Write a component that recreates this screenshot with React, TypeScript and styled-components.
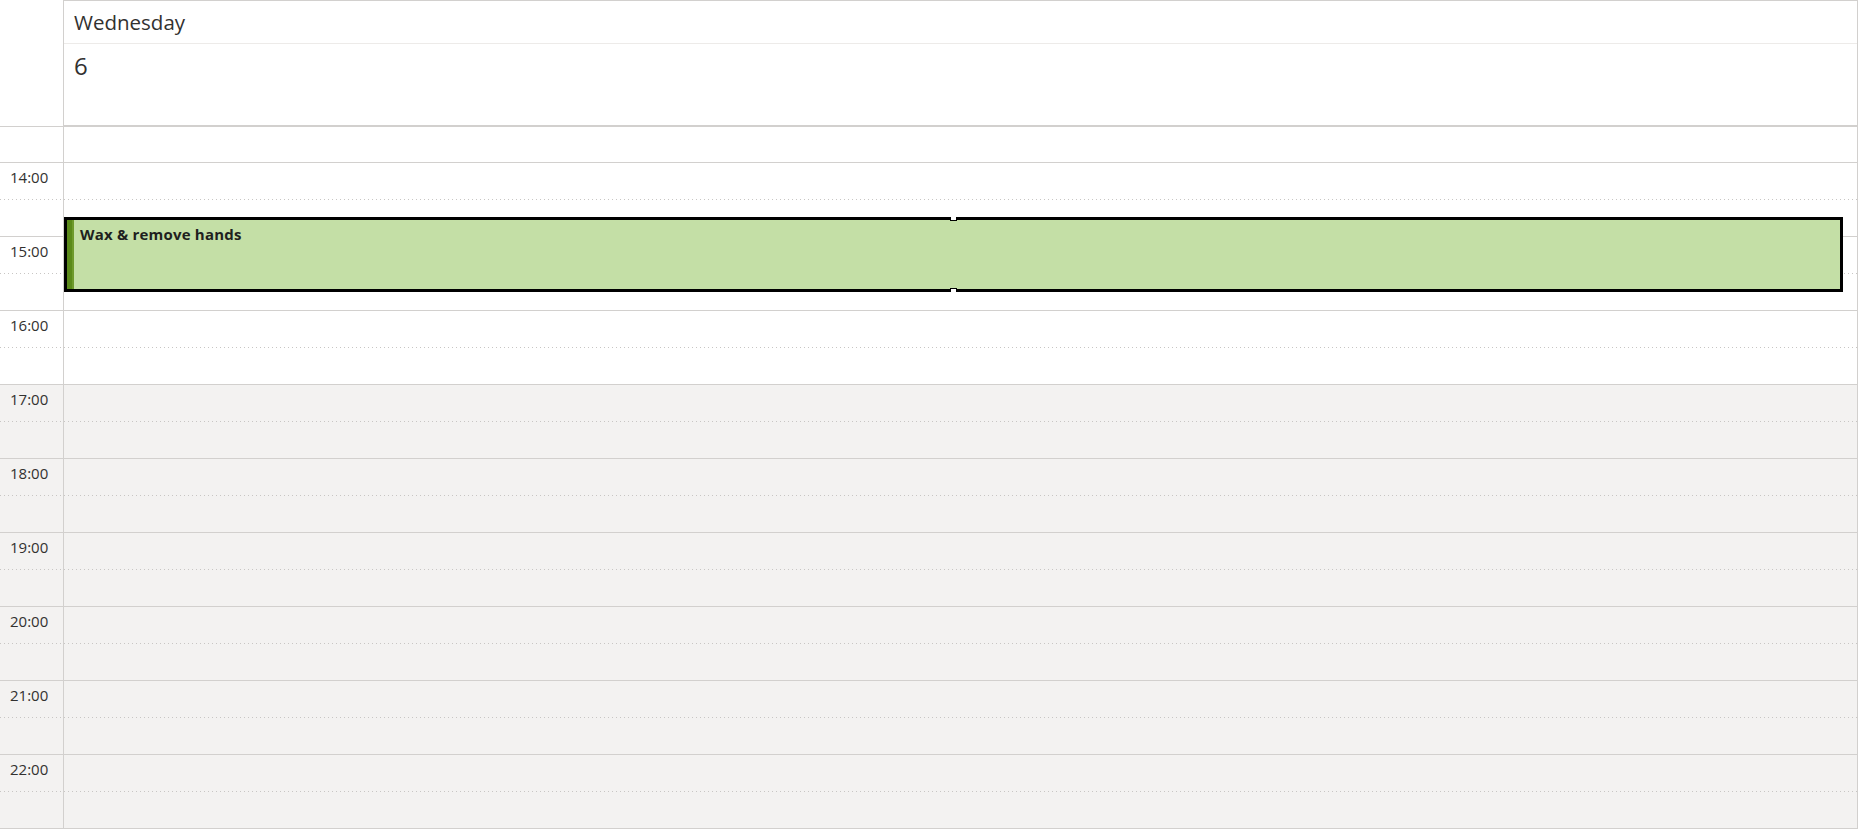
import React from 'react';
import styled, { createGlobalStyle } from 'styled-components';

const GlobalStyle = createGlobalStyle`
  html, body { margin: 0; padding: 0; background: #ffffff; }
  body { font-family: "Open Sans", "Noto Sans", sans-serif; color: #323130; }
`;

const LINE = '#d2d0ce';

const hours = [14, 15, 16, 17, 18, 19, 20, 21, 22];
const workEnd = 17;

const Calendar = styled.div`
  width: 1858px;
  height: 829px;
  overflow: hidden;
  display: flex;
  flex-direction: column;
`;

const HeaderRow = styled.div`
  display: flex;
  height: 127px;
`;

const HeaderGutter = styled.div`
  width: 63px;
  height: 126px;
  border-right: 1px solid ${LINE};
  border-bottom: 1px solid ${LINE};
`;

const DayHeader = styled.div`
  flex: 1;
  display: flex;
  flex-direction: column;
  border-top: 1px solid ${LINE};
  border-right: 1px solid ${LINE};
  border-bottom: 2px solid ${LINE};
`;

const DayName = styled.div`
  height: 42px;
  border-bottom: 1px solid #edebe9;
  padding-left: 10px;
  font-size: 20.5px;
  line-height: 42px;
`;

const DayDate = styled.div`
  flex: 1;
  padding: 6px 0 0 10px;
  font-size: 24px;
  line-height: 32px;
`;

const Row = styled.div<{ $height: number; $shaded?: boolean }>`
  display: flex;
  height: ${p => p.$height}px;
  border-bottom: 1px solid ${LINE};
  background: ${p => (p.$shaded ? '#f3f2f1' : '#ffffff')};
  position: relative;
`;

const Gutter = styled.div`
  width: 53px;
  padding: 4px 0 0 10px;
  border-right: 1px solid ${LINE};
  font-size: 15px;
  line-height: 20px;
  position: relative;
  z-index: 1;
`;

const Cell = styled.div`
  flex: 1;
  border-right: 1px solid ${LINE};
`;

const HalfLine = styled.div`
  position: absolute;
  left: 0;
  right: 0;
  top: 36px;
  height: 1px;
  background: repeating-linear-gradient(to right, #c8c6c4 0 1px, transparent 1px 4px);
`;

const Hours = styled.div`
  position: relative;
  flex: 1;
`;

const Event = styled.div`
  position: absolute;
  left: 64px;
  right: 15px;
  top: 54px;
  height: 75px;
  box-sizing: border-box;
  border: 3px solid #000000;
  background: #c4dfa6;
  display: flex;
  z-index: 2;
`;

const Stripe = styled.div`
  width: 7px;
  background: linear-gradient(to right, #5b8a1a 0 5px, #6e9a2c 5px 7px);
`;

const EventTitle = styled.div`
  padding: 5px 0 0 6px;
  font-size: 15px;
  letter-spacing: 0.2px;
  font-weight: 700;
  color: #201f1e;
  line-height: 19px;
`;

const Handle = styled.div<{ $side: 'top' | 'bottom' }>`
  position: absolute;
  left: 50%;
  margin-left: -4px;
  width: 5px;
  height: 3px;
  background: #ffffff;
  border: 1px solid #000000;
  ${p => (p.$side === 'top' ? 'top: -3px; border-top: none;' : 'bottom: -3px; border-bottom: none;')}
`;

const label = (n: number) => `${n}:00`;

const App: React.FC = () => {
  return (
    <>
      <GlobalStyle />
      <Calendar>
        <HeaderRow>
          <HeaderGutter />
          <DayHeader>
            <DayName>Wednesday</DayName>
            <DayDate>6</DayDate>
          </DayHeader>
        </HeaderRow>
        <Row $height={36}>
          <Gutter />
          <Cell />
        </Row>
        <Hours>
          {hours.map(h => (
            <Row key={h} $height={73} $shaded={h >= workEnd}>
              <Gutter>{label(h)}</Gutter>
              <Cell />
              <HalfLine />
            </Row>
          ))}
          <Event>
            <Stripe />
            <EventTitle>Wax &amp; remove hands</EventTitle>
            <Handle $side="top" />
            <Handle $side="bottom" />
          </Event>
        </Hours>
      </Calendar>
    </>
  );
};

export default App;
